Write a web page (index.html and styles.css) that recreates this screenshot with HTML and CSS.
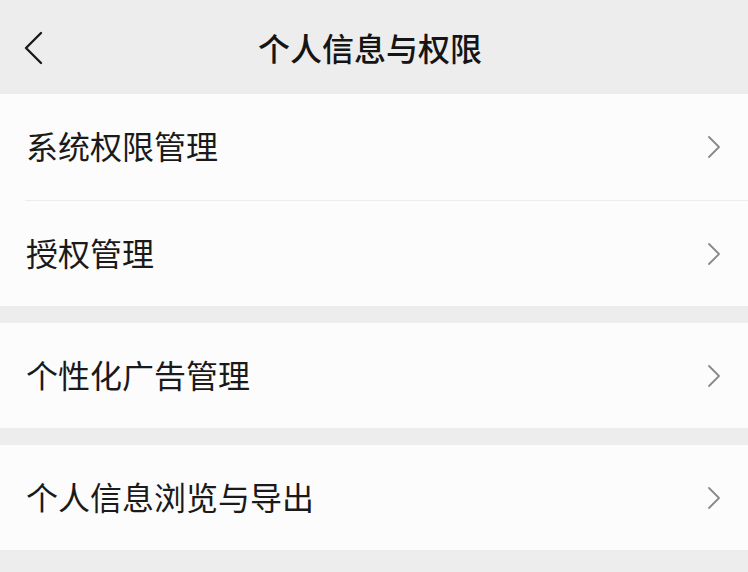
FILE: index.html
```html
<!DOCTYPE html>
<html lang="zh-CN">
<head>
<meta charset="utf-8">
<title>个人信息与权限</title>
<link rel="stylesheet" href="styles.css">
</head>
<body>
<div class="page">
  <header class="navbar">
    <span class="back" aria-label="返回">
      <svg width="22" height="34" viewBox="0 0 22 34"><polyline points="19,2 4,17 19,32" fill="none" stroke="#1a1a1a" stroke-width="2.4" stroke-linecap="round" stroke-linejoin="round"/></svg>
    </span>
    <h1 class="title">个人信息与权限</h1>
  </header>

  <section class="group">
    <div class="row">
      <span class="label">系统权限管理</span>
      <svg class="chev" width="14" height="24" viewBox="0 0 14 24"><polyline points="2,2 12,12 2,22" fill="none" stroke="#8a8a8a" stroke-width="1.8" stroke-linecap="round" stroke-linejoin="round"/></svg>
    </div>
    <div class="row">
      <span class="label">授权管理</span>
      <svg class="chev" width="14" height="24" viewBox="0 0 14 24"><polyline points="2,2 12,12 2,22" fill="none" stroke="#8a8a8a" stroke-width="1.8" stroke-linecap="round" stroke-linejoin="round"/></svg>
    </div>
  </section>

  <section class="group">
    <div class="row">
      <span class="label">个性化广告管理</span>
      <svg class="chev" width="14" height="24" viewBox="0 0 14 24"><polyline points="2,2 12,12 2,22" fill="none" stroke="#8a8a8a" stroke-width="1.8" stroke-linecap="round" stroke-linejoin="round"/></svg>
    </div>
  </section>

  <section class="group">
    <div class="row">
      <span class="label">个人信息浏览与导出</span>
      <svg class="chev" width="14" height="24" viewBox="0 0 14 24"><polyline points="2,2 12,12 2,22" fill="none" stroke="#8a8a8a" stroke-width="1.8" stroke-linecap="round" stroke-linejoin="round"/></svg>
    </div>
  </section>
</div>
</body>
</html>
```
FILE: styles.css
```css
html, body {
  margin: 0;
  padding: 0;
  background: #ededed;
}
body {
  font-family: "Noto Sans CJK SC", "Noto Sans", sans-serif;
  color: #1a1a1a;
}
.page {
  width: 748px;
  height: 572px;
  overflow: hidden;
  display: flex;
  flex-direction: column;
  gap: 17px;
}
.navbar {
  position: relative;
  height: 94px;
  margin-bottom: -17px;
  display: flex;
  align-items: center;
  justify-content: center;
  padding-right: 8px;
  background: #ededed;
}
.back {
  position: absolute;
  left: 22px;
  top: 31px;
  display: block;
  line-height: 0;
}
.title {
  margin: 0;
  font-size: 32px;
  font-weight: 500;
  line-height: 1;
  letter-spacing: 0;
  margin-top: -1px;
  color: #151515;
}
.group {
  background: #fcfcfc;
  padding-left: 25px;
}
.row {
  height: 105px;
  display: flex;
  align-items: center;
  justify-content: space-between;
  padding-right: 27px;
  box-sizing: border-box;
}
.row + .row {
  border-top: 1px solid #ececec;
  height: 106px;
}
.group:first-of-type .row:first-child {
  height: 106px;
}
.label {
  font-size: 32px;
  line-height: 1;
  margin-left: 1px;
  margin-top: -4px;
}
.chev {
  display: block;
}
```
